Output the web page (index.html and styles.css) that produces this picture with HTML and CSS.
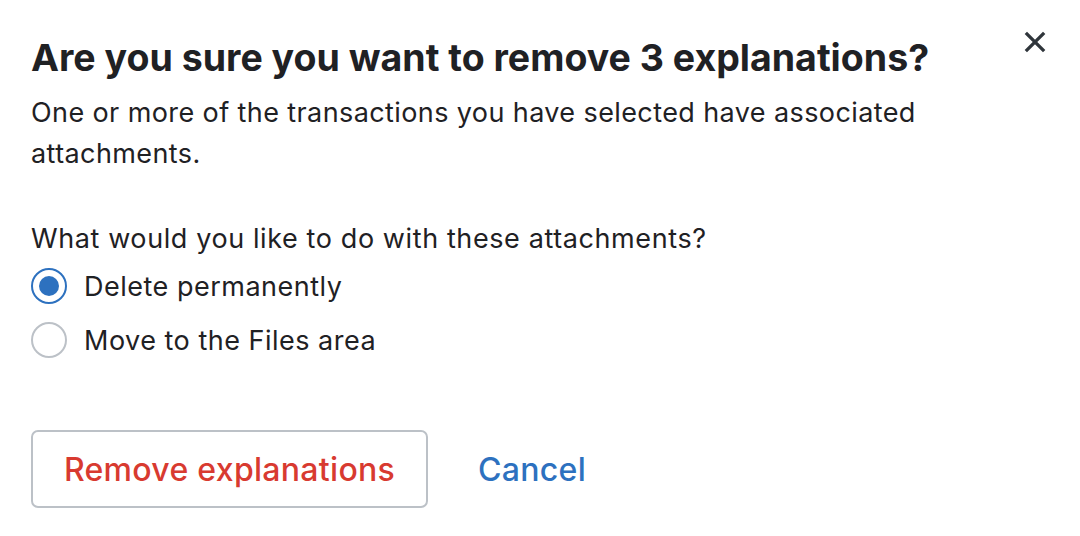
FILE: index.html
```html
<!DOCTYPE html>
<html lang="en">
<head>
    <meta charset="UTF-8">
    <meta name="viewport" content="width=device-width, initial-scale=1.0">
    <title>Remove explanations</title>
    <link rel="stylesheet" href="styles.css">
</head>
<body>

    <div class="dialog">
        <button class="close-btn" type="button" aria-label="Close">
            <svg viewBox="0 0 24 24" width="22" height="22">
                <path d="M2 2 L22 22 M22 2 L2 22" stroke="currentColor" stroke-width="3.6" stroke-linecap="butt"/>
            </svg>
        </button>

        <h1 class="dialog-title">Are you sure you want to remove 3 explanations?</h1>
        <p class="dialog-text">One or more of the transactions you have selected have associated attachments.</p>

        <fieldset class="choice">
            <legend class="choice-label">What would you like to do with these attachments?</legend>
            <label class="radio-row">
                <input type="radio" name="attachments" value="delete" checked>
                <span class="radio-mark"></span>
                Delete permanently
            </label>
            <label class="radio-row">
                <input type="radio" name="attachments" value="move">
                <span class="radio-mark"></span>
                Move to the Files area
            </label>
        </fieldset>

        <div class="actions">
            <button class="btn btn-danger" type="button">Remove explanations</button>
            <button class="btn btn-link" type="button">Cancel</button>
        </div>
    </div>

</body>
</html>
```

FILE: styles.css
```css
/* Dialog: remove explanations */
:root {
    --text: #1f2124;
    --muted-border: #bcc1c7;
    --blue: #2d71bf;
    --red: #d83a30;
    --icon: #2f353b;
    --font: 'Inter', 'Liberation Sans', sans-serif;
}

* { margin: 0; padding: 0; box-sizing: border-box; }

body {
    font-family: var(--font);
    color: var(--text);
    background: #fff;
}

.dialog {
    position: relative;
    padding: 36px 31px 0;
}

.close-btn {
    position: absolute;
    top: 31px;
    right: 34px;
    border: none;
    background: none;
    color: var(--icon);
    display: flex;
    cursor: pointer;
}

.dialog-title {
    font-size: 37.5px;
    font-weight: 700;
    line-height: 44px;
}

.dialog-text {
    margin-top: 12px;
    max-width: 920px;
    font-size: 27px;
    line-height: 41px;
    letter-spacing: 0.4px;
}

.choice {
    border: none;
    margin-top: 44px;
}

.choice-label {
    font-size: 27px;
    line-height: 41px;
    letter-spacing: 0.6px;
}

.radio-row {
    display: flex;
    align-items: center;
    gap: 17px;
    height: 54px;
    font-size: 27px;
    letter-spacing: 0.5px;
    cursor: pointer;
}

.radio-row input { display: none; }

.radio-mark {
    width: 36px;
    height: 36px;
    border-radius: 50%;
    border: 2px solid var(--muted-border);
    display: flex;
    align-items: center;
    justify-content: center;
    flex-shrink: 0;
}

.radio-row input:checked + .radio-mark {
    border-color: var(--blue);
}

.radio-row input:checked + .radio-mark::after {
    content: '';
    width: 20px;
    height: 20px;
    border-radius: 50%;
    background: var(--blue);
}

.actions {
    display: flex;
    align-items: center;
    gap: 50px;
    margin-top: 63px;
}

.btn {
    font-family: var(--font);
    font-size: 32px;
    font-weight: 500;
    letter-spacing: 0.3px;
    background: none;
    cursor: pointer;
}

.btn-danger {
    width: 397px;
    height: 78px;
    border: 2px solid var(--muted-border);
    border-radius: 7px;
    color: var(--red);
}

.btn-link {
    border: none;
    color: var(--blue);
}
```
